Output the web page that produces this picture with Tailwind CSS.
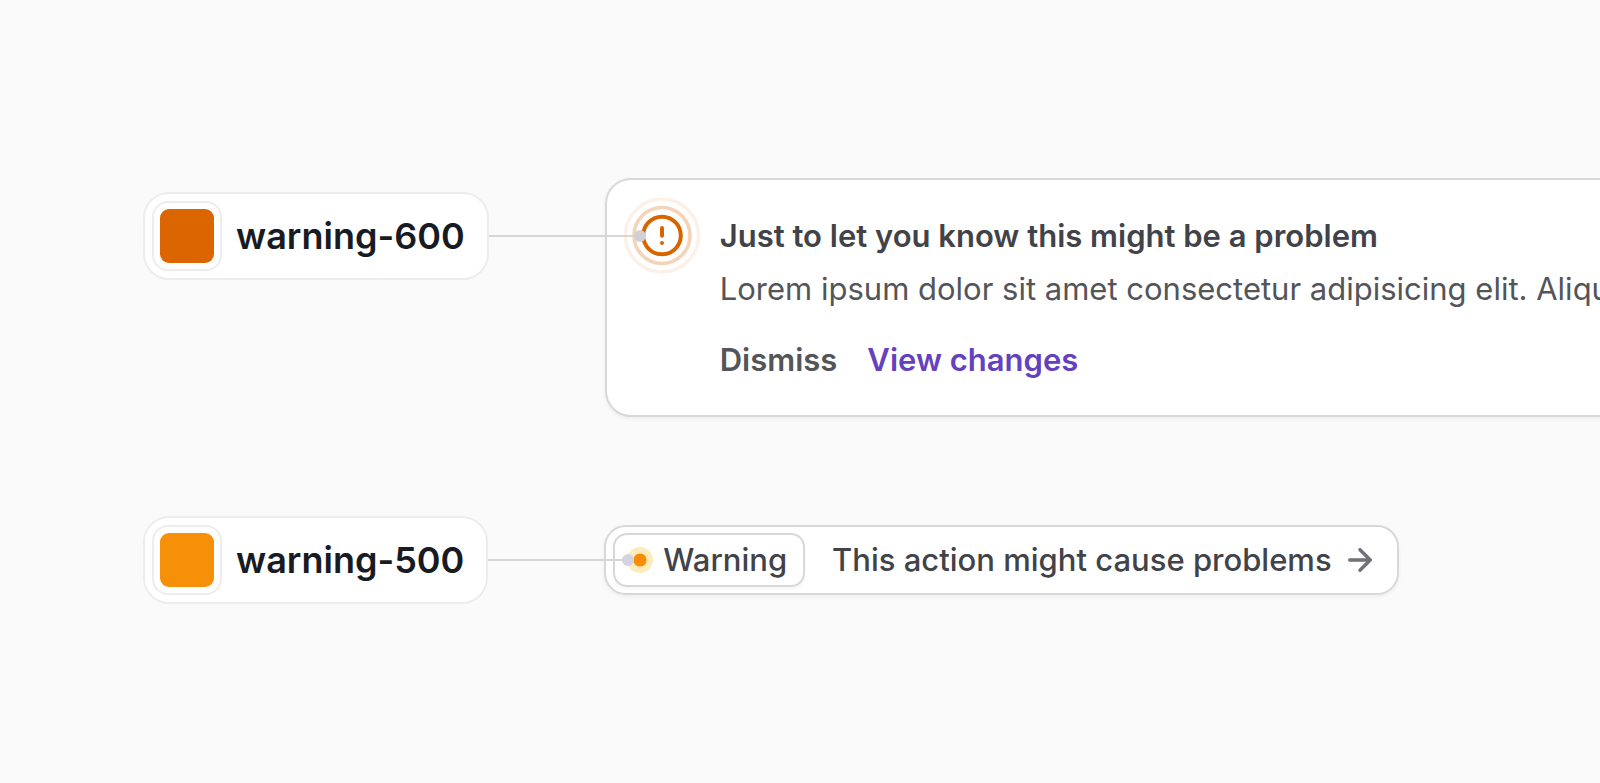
<!DOCTYPE html>
<html lang="en">
<head>
<meta charset="utf-8">
<title>Warning colours</title>
<script src="https://cdn.jsdelivr.net/npm/@tailwindcss/browser@4"></script>
</head>
<body class="bg-[#fafafa] font-['Inter',sans-serif] overflow-x-hidden">
<main class="flex min-h-screen flex-col gap-[99px] overflow-hidden pl-[143px] pt-[178px]">

  <section class="flex items-start">
    <div class="mt-[14px] flex h-[88px] flex-none items-center rounded-[26px] border-2 border-[#ededee] bg-white pl-[7px] pr-[22px]">
      <span class="mr-[14px] rounded-2xl border-2 border-[#ededee] p-[6px]"><span class="block size-[54px] rounded-[9px] bg-[#db6500]"></span></span>
      <span class="text-4xl font-semibold text-[#181b22]">warning-600</span>
    </div>
    <div class="relative z-10 mt-[57px] h-[2px] w-[116px] flex-none bg-[#d6d6d8]">
      <span class="absolute -right-[41px] top-1/2 h-[2px] w-[41px] -translate-y-1/2 bg-[#d6d6d8]"></span>
      <span class="absolute -right-[41px] top-1/2 size-3 -translate-y-1/2 rounded-full bg-[#d0d0d5]"></span>
    </div>
    <article class="flex flex-none gap-5 rounded-[26px] border-2 border-[#d8d8d9] bg-white pb-[33px] pl-[17px] pr-8 pt-[18px] shadow-[0_2px_4px_rgba(16,24,40,0.05)]">
      <svg class="size-[76px] flex-none" viewBox="0 0 76 76" fill="none" stroke="#d66500" aria-hidden="true">
        <circle cx="38" cy="37.5" r="36.5" stroke-width="3.4" stroke-opacity=".09"/>
        <circle cx="38" cy="37.5" r="28" stroke-width="3.6" stroke-opacity=".28"/>
        <circle cx="38" cy="37.5" r="18.8" stroke-width="4"/>
        <path d="M38 30v7.8M38 45v.1" stroke-width="4" stroke-linecap="round"/>
      </svg>
      <div class="whitespace-nowrap pt-[16px] text-[31px] leading-[44px]">
        <h2 class="font-semibold text-[#414349]">Just to let you know this might be a problem</h2>
        <p class="mt-[9px] text-[#535559]">Lorem ipsum dolor sit amet consectetur adipisicing elit. Aliquid pariatur, ipsum dolor.</p>
        <div class="mt-[27px] flex gap-[30px] font-semibold">
          <button type="button" class="text-[#535559]">Dismiss</button>
          <button type="button" class="text-[#6441bd]">View changes</button>
        </div>
      </div>
    </article>
  </section>

  <section class="flex items-center">
    <div class="flex h-[88px] flex-none items-center rounded-[26px] border-2 border-[#ededee] bg-white pl-[7px] pr-[22px]">
      <span class="mr-[14px] rounded-2xl border-2 border-[#ededee] p-[6px]"><span class="block size-[54px] rounded-[9px] bg-[#f79009]"></span></span>
      <span class="text-4xl font-semibold text-[#181b22]">warning-500</span>
    </div>
    <div class="relative z-10 h-[2px] w-[116px] flex-none bg-[#d6d6d8]">
      <span class="absolute -right-[24px] top-1/2 h-[2px] w-[24px] -translate-y-1/2 bg-[#d6d6d8]"></span>
      <span class="absolute -right-[30px] top-1/2 size-3 -translate-y-1/2 rounded-full bg-[#d4d4de]"></span>
    </div>
    <a href="#" class="flex h-[70px] flex-none items-center whitespace-nowrap rounded-[22px] border-2 border-[#d8d8d9] bg-white pl-[7px] pr-[25px] text-[31px] font-medium text-[#414349] shadow-[0_2px_4px_rgba(16,24,40,0.05)]">
      <span class="flex h-[54px] items-center gap-[10px] rounded-[14px] border-2 border-[#d8d8d9] pl-[12px] pr-[16px] shadow-[0_2px_3px_rgba(16,24,40,0.04)]">
        <svg class="size-[26px]" viewBox="0 0 26 26" aria-hidden="true"><circle cx="13" cy="13" r="13" fill="#feecbd"/><circle cx="13" cy="13" r="6.6" fill="#f98d06"/></svg>
        Warning
      </span>
      <span class="ml-[27px]">This action might cause problems</span>
      <svg class="ml-[16px] size-[24px]" viewBox="0 0 24 24" fill="none" stroke="#707276" stroke-width="3.4" stroke-linecap="round" stroke-linejoin="round" aria-hidden="true"><path d="M1.7 12h20.6M12 1.7 22.3 12 12 22.3"/></svg>
    </a>
  </section>

</main>
</body>
</html>
